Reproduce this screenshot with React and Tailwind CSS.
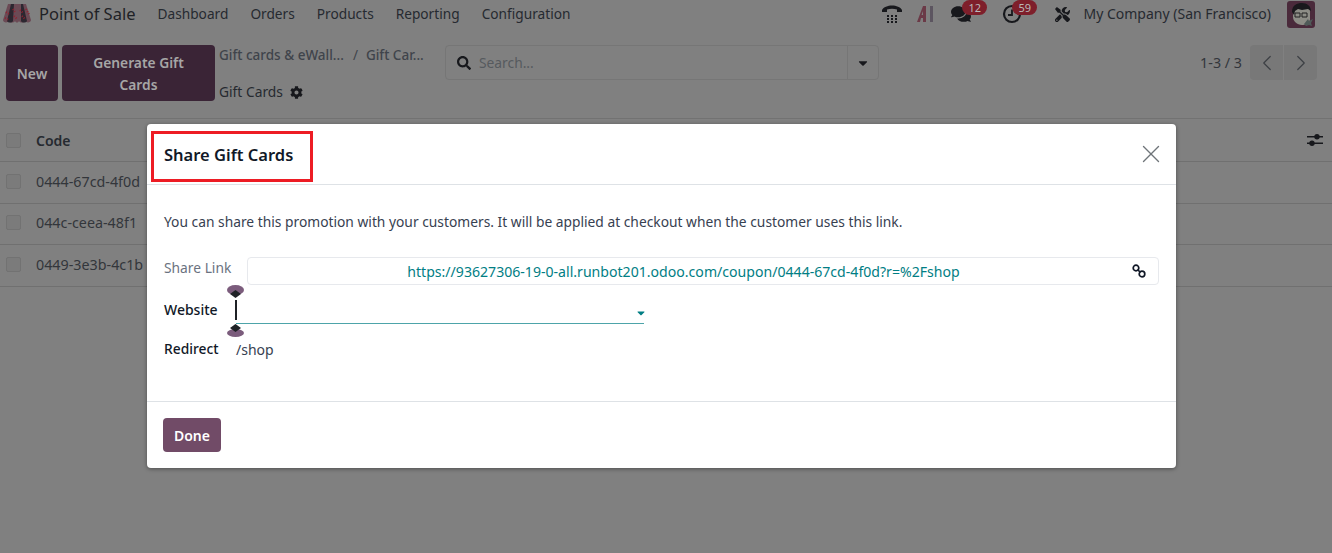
import { ChevronLeft, ChevronRight, X } from 'lucide-react';
import { FaCog, FaSearch, FaCaretDown, FaComments, FaTools } from 'react-icons/fa';

const menus = ['Dashboard', 'Orders', 'Products', 'Reporting', 'Configuration'];
const rows = ['0444-67cd-4f0d', '044c-ceea-48f1', '0449-3e3b-4c1b'];

const Logo = () => (
  <svg width="28" height="20" viewBox="0 0 28 20" className="shrink-0">
    <path d="M5 0h18l5 16c0 3-5 3-6 1-1 2-5 2-6 0-1 2-3 2-4 0-1 2-5 2-6 0-1 2-6 2-6-1z" fill="#6b4a55" />
    <path d="M8 0h3l-1 17c-1 2-5 2-6 0zM18 0h2l4 17c-1 2-5 2-6 0z" fill="#2c2730" />
    <path d="M3 8l3 2M10 5l2 3M17 6l3 3M23 5l3 5M2 14l4 2M11 12l3 3M19 12l3 3" stroke="#93202f" strokeWidth="2" strokeDasharray="1 1.500" />
  </svg>
);

const PhoneIcon = () => (
  <svg width="20" height="20" viewBox="0 0 20 20" fill="#17181c">
    <path d="M0 6c3-6 17-6 20 0v2h-5V5.500c-3-1-7-1-10 0V8H0z" />
    <path d="M5 11h2v2H5zM9 11h2v2H9zM13 11h2v2h-2zM5 14h2v2H5zM9 14h2v2H9zM13 14h2v2h-2zM5 17h2v2H5zM9 17h2v2H9zM13 17h2v2h-2z" />
  </svg>
);

const AiIcon = () => (
  <svg width="18" height="16" viewBox="0 0 18 16">
    <path d="M0 16L6 0h3v16H6v-4H4l-1 4z" fill="#6b3a47" />
    <path d="M6 9V5L4.500 9z" fill="#808080" />
    <rect x="13" y="0" width="3" height="16" fill="#5c5560" />
  </svg>
);

const ClockIcon = () => (
  <svg width="20" height="20" viewBox="0 0 20 20" fill="none" stroke="#17181c" strokeWidth="2.200">
    <circle cx="10" cy="10" r="8" />
    <path d="M10 5.500V11H6" strokeWidth="1.800" />
  </svg>
);

const LinkIcon = () => (
  <svg width="14" height="14" viewBox="0 0 14 14" fill="none" stroke="#111827" strokeWidth="1.700" className="mr-[12px]">
    <circle cx="4" cy="4" r="2.800" />
    <circle cx="10" cy="10" r="2.800" />
    <path d="M5.500 5.500l3 3" />
  </svg>
);

const Avatar = () => (
  <svg width="28" height="27" viewBox="0 0 28 27" className="rounded-[3px]">
    <rect width="28" height="27" fill="#4a2a3b" />
    <path d="M6 11c0-6 4-8 9-8s8 3 8 8v8c-2 4-5 5-8 5-5 0-9-4-9-8z" fill="#8d8d86" />
    <path d="M5 11c0-7 5-9 10-9s9 3 9 8l-3-2-6 1-4-1-3 2-1 4z" fill="#19181c" />
    <path d="M8 12h5v4H8zM15 12h5v4h-5z" fill="none" stroke="#222" strokeWidth="1" />
    <path d="M17 23l4-5 1 2 4-2-2 4 1 3-3-1-3 1z" fill="#4f5a58" />
  </svg>
);

const Badge = ({ children, className }) => (
  <span className={`absolute -top-[4px] h-[15px] rounded-full bg-[#7e1f2b] px-[6px] text-[11px] leading-[15px] text-[#b9b9b9] ${className}`}>
    {children}
  </span>
);

const Check = () => <span className="block h-[15px] w-[15px] rounded-[2px] border border-[#727272] bg-[#7b7b7b]" />;

const App = () => {
  return (
    <div className="relative h-[553px] w-[1332px] overflow-hidden bg-[#808080] font-['Noto_Sans',sans-serif] text-[14px] text-[#262a30]">
      {/* navbar */}
      <div className="flex h-[28px] items-center">
        <div className="ml-[3px] flex items-center">
          <Logo />
          <span className="ml-[8px] text-[16.500px] text-[#1f2226]">Point of Sale</span>
        </div>
        <div className="ml-[22px] flex gap-[22px] text-[13.700px] text-[#262a30]">
          {menus.map((m) => (
            <span key={m}>{m}</span>
          ))}
        </div>
        <div className="ml-auto flex items-center">
          <PhoneIcon />
          <span className="ml-[15px]"><AiIcon /></span>
          <span className="relative ml-[16px] block h-[20px] w-[20px]">
            <FaComments size={20} color="#17181c" />
            <Badge className="left-[11px]">12</Badge>
          </span>
          <span className="relative ml-[31px] block h-[20px] w-[20px]">
            <ClockIcon />
            <Badge className="left-[10px]">59</Badge>
          </span>
          <span className="ml-[33px]"><FaTools size={15} color="#17181c" /></span>
          <span className="ml-[13px] -translate-y-px text-[14px] text-[#262a30]">My Company (San Francisco)</span>
          <span className="ml-[16px] mr-[17px] block h-[27px]"><Avatar /></span>
        </div>
      </div>

      {/* control panel */}
      <div className="flex h-[90px] pt-[17px]">
        <div className="ml-[6px] flex h-[56px] gap-[4px] font-semibold text-[#a6a6a6]">
          <span className="flex w-[52px] items-center justify-center rounded-[4px] bg-[#3a2436]">New</span>
          <span className="flex w-[153px] items-center justify-center rounded-[4px] bg-[#3a2436] pt-[2px] text-center text-[13.800px] leading-[22px]">
            Generate Gift
            <br />
            Cards
          </span>
        </div>
        <div className="ml-[4px] w-[226px]">
          <div className="flex h-[20px] items-center font-medium text-[13.500px] text-[#3f444b]">
            <span>Gift cards &amp; eWall...</span>
            <span className="ml-[9px] font-normal">/</span>
            <span className="ml-[8px]">Gift Car...</span>
          </div>
          <div className="mt-[13px] flex h-[28px] items-center gap-[7px] text-[13.800px] text-[#262a30]">
            <span>Gift Cards</span>
            <FaCog size={13} color="#17181c" />
          </div>
        </div>
        <div className="flex h-[35px] w-[434px] items-center rounded-[4px] border border-[#767676]">
          <span className="ml-[11px]"><FaSearch size={14} color="#17181c" /></span>
          <span className="ml-[8px] pt-[1px] text-[13.800px] text-[#565a5e]">Search...</span>
          <span className="ml-auto flex h-full w-[31px] items-center justify-center border-l border-[#767676]">
            <FaCaretDown size={14} color="#17181c" />
          </span>
        </div>
        <div className="ml-auto mr-[15px] flex h-[35px] items-center">
          <span className="mr-[8px] pt-[1px] text-[14.300px] text-[#33363b]">1-3 / 3</span>
          <span className="flex h-[35px] w-[33px] items-center justify-center rounded-l-[4px] bg-[#787878]">
            <ChevronLeft size={26} strokeWidth={1.100} color="#3c3f44" />
          </span>
          <span className="ml-px flex h-[35px] w-[33px] items-center justify-center rounded-r-[4px] bg-[#787878]">
            <ChevronRight size={26} strokeWidth={1.100} color="#3c3f44" />
          </span>
        </div>
      </div>

      {/* list behind the dialog */}
      <div className="border-t border-[#727272]">
        <div className="flex h-[43px] items-center justify-between border-b border-[#707070] pl-[6px] pr-[9px] font-semibold">
          <span className="flex items-center gap-[15px]">
            <Check />
            Code
          </span>
          <svg width="16" height="14" viewBox="0 0 16 14" fill="#17181c">
            <path d="M0 3h16v1.500H0zM0 9.500h16V11H0z" />
            <circle cx="10" cy="3.700" r="2.700" />
            <circle cx="5" cy="10.200" r="2.700" />
          </svg>
        </div>
        {rows.map((r) => (
          <div key={r} className="flex h-[41.500px] items-center gap-[15px] border-b border-[#707070] pb-[2px] pl-[6px] text-[14.300px] text-[#33363b]">
            <Check />
            {r}
          </div>
        ))}
      </div>

      {/* dialog */}
      <div className="absolute left-[147px] top-[124px] flex h-[344px] w-[1029px] flex-col rounded-[4px] bg-white text-[13.800px] text-[#374151] shadow-[0_1px_4px_rgba(0,0,0,0.4)]">
        <div className="relative flex h-[61px] items-center border-b border-[#dee2e6] pl-[17px] pr-[10px]">
          <span className="translate-y-px text-[16.500px] font-semibold text-[#111827]">Share Gift Cards</span>
          <X size={30} strokeWidth={1.100} color="#6f7479" className="ml-auto" />
          <span className="absolute left-[4px] top-[7px] h-[51px] w-[162px] border-[3px] border-[#ed1c24]" />
        </div>
        <div className="flex-1 px-[17px] pt-[27px]">
          <p className="h-[20px] leading-[20px]">
            You can share this promotion with your customers. It will be applied at checkout when the customer uses this link.
          </p>
          <div className="mt-[25px] flex h-[28px] items-center">
            <span className="w-[83px] -translate-y-[3px] text-[#6b7280]">Share Link</span>
            <span className="flex h-[28px] flex-1 items-center rounded-[4px] border border-[#e7e9ed]">
              <span className="flex-1 pr-[13px] pt-[1px] text-center text-[14.100px] text-[#017e84]">
                https://93627306-19-0-all.runbot201.odoo.com/coupon/0444-67cd-4f0d?r=%2Fshop
              </span>
              <LinkIcon />
            </span>
          </div>
          <div className="mt-[13px] flex h-[26px]">
            <span className="w-[72px] pt-[1px] font-medium text-[14px] text-[#111827]">Website</span>
            <div className="relative flex h-[26px] w-[408px] items-center justify-end border-b border-[#017e84]/70">
              <FaCaretDown size={12} color="#017e84" className="-mr-[3px] mt-[4px]" />
              <span className="absolute left-[-1px] top-[2px] h-[20px] w-[2px] bg-[#1f2226]" />
              <span className="absolute -left-[9px] -top-[13px] h-[10px] w-[17px] rounded-[50%] bg-[#7b5c7c]" />
              <span className="absolute -left-[6px] -top-[8px] h-[8px] w-[11px] bg-[#1f2226] [clip-path:polygon(50%_0,100%_50%,50%_100%,0_50%)]" />
              <span className="absolute -left-[9px] top-[31px] h-[8px] w-[17px] rounded-[50%] bg-[#7b5c7c]" />
              <span className="absolute -left-[6px] top-[26px] h-[8px] w-[11px] bg-[#1f2226] [clip-path:polygon(50%_0,100%_50%,50%_100%,0_50%)]" />
            </div>
          </div>
          <div className="mt-[13px] flex h-[24px] items-center">
            <span className="w-[72px] font-medium text-[#111827]">Redirect</span>
            <span className="text-[14px]">/shop</span>
          </div>
        </div>
        <div className="flex h-[67px] items-center border-t border-[#dee2e6] pl-[16px]">
          <span className="flex h-[34px] w-[58px] items-center justify-center rounded-[4px] bg-[#714b67] text-[14px] font-semibold text-white">
            Done
          </span>
        </div>
      </div>
    </div>
  );
};

export default App;
